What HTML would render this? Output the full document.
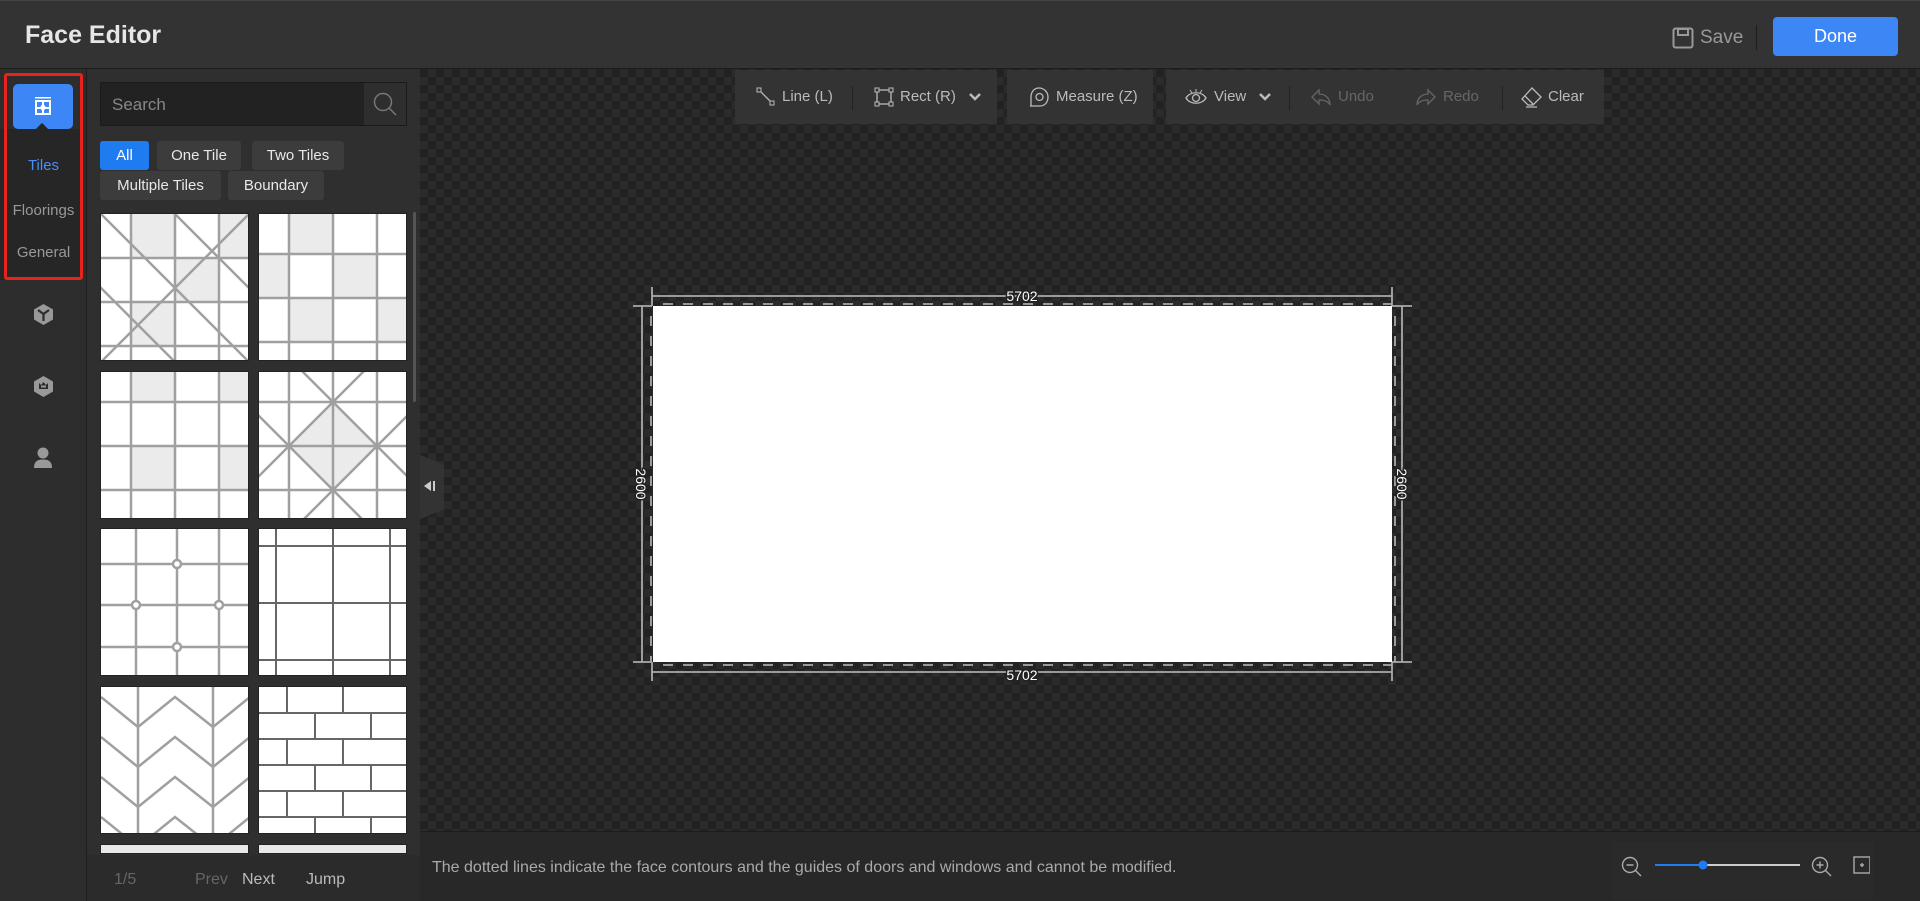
<!DOCTYPE html>
<html><head><meta charset="utf-8"><style>
*{box-sizing:border-box;margin:0;padding:0}
body{width:1920px;height:901px;overflow:hidden;background:#2b2b2b;font-family:"Liberation Sans",sans-serif;position:relative;color:#ddd}
.abs{position:absolute}
#hdr{left:0;top:0;width:1920px;height:69px;background:#333;border-top:1px solid #444;border-bottom:1px solid #1c1c1c}
#side{left:0;top:69px;width:87px;height:832px;background:#2d2d2d;border-right:1px solid #1e1e1e}
#panel{left:87px;top:69px;width:333px;height:832px;background:#2f2f2f}
#canvas{left:420px;top:69px;width:1500px;height:762px;
background-color:#222;
background-image:linear-gradient(45deg,#2b2b2b 25%,transparent 25%,transparent 75%,#2b2b2b 75%),linear-gradient(45deg,#2b2b2b 25%,transparent 25%,transparent 75%,#2b2b2b 75%);
background-size:16px 16px;background-position:0 0,8px 8px}
#foot{left:420px;top:831px;width:1500px;height:70px;background:#282828;border-top:1px solid #1d1d1d}
.chip{position:absolute;height:29px;background:#3c3c3c;border-radius:3px;color:#e8e8e8;font-size:15px;line-height:29px;text-align:center}
.tile{position:absolute;width:149px;height:148px;background:#fff;border:1px solid #222;overflow:hidden}
.tb{position:absolute;top:70px;height:54px;background:#333;border-radius:2px}
.tbi{position:absolute;top:0;height:54px;line-height:54px;font-size:15px;color:#bbb;display:flex;align-items:center;gap:6px}
.sep{position:absolute;top:16px;width:1px;height:24px;background:#222}
</style></head><body>
<div id="hdr" class="abs">
  <div class="abs" style="left:25px;top:20px;font-size:25px;font-weight:bold;color:#e6e6e6">Face Editor</div>
  <svg class="abs" style="left:1672px;top:26px" width="22" height="22" viewBox="0 0 22 22"><rect x="1.5" y="1.5" width="19" height="19" rx="2" fill="none" stroke="#999" stroke-width="2"/><rect x="6" y="2" width="10" height="6" fill="none" stroke="#999" stroke-width="2"/></svg>
  <div class="abs" style="left:1700px;top:26px;font-size:19px;color:#999">Save</div>
  <div class="abs" style="left:1756px;top:24px;width:1px;height:25px;background:#1c1c1c"></div>
  <div class="abs" style="left:1773px;top:16px;width:125px;height:39px;background:#3d86f5;border-radius:4px;color:#fff;font-size:18px;line-height:39px;text-align:center">Done</div>
</div>
<div id="side" class="abs">
  <div class="abs" style="left:0;top:60px;width:80px;height:151px;background:#262626"></div>
  <div class="abs" style="left:13px;top:15px;width:60px;height:45px;background:#3d86f5;border-radius:5px"></div>
  <svg class="abs" style="left:34px;top:28px" width="18" height="19" viewBox="0 0 18 19"><rect x="1" y="3" width="16" height="15" fill="#fff"/><rect x="3" y="5" width="5" height="5" fill="#3d86f5"/><rect x="10" y="5" width="5" height="5" fill="#3d86f5"/><rect x="3" y="12" width="5" height="4" fill="#3d86f5"/><rect x="10" y="12" width="5" height="4" fill="#3d86f5"/><path d="M9 6 L12 10.5 L9 15 L6 10.5Z" fill="#fff"/><rect x="1" y="0" width="16" height="1.5" fill="#fff"/></svg>
  <div class="abs" style="left:37px;top:56px;width:10px;height:10px;background:#262626;transform:rotate(45deg)"></div>
  <div class="abs" style="left:0;top:88px;width:87px;text-align:center;color:#4a8ef5;font-size:15px">Tiles</div>
  <div class="abs" style="left:0;top:133px;width:87px;text-align:center;color:#999;font-size:15px">Floorings</div>
  <div class="abs" style="left:0;top:175px;width:87px;text-align:center;color:#999;font-size:15px">General</div>
  <div class="abs" style="left:4px;top:4px;width:79px;height:207px;border:3px solid #e8231d;border-radius:3px"></div>
  <svg class="abs" style="left:33px;top:234px" width="21" height="23" viewBox="0 0 21 23"><path d="M10.5 1 L20 6.5 V16.5 L10.5 22 L1 16.5 V6.5Z" fill="#999"/><path d="M5 7 L10.5 11 L16 7 M10.5 11 V18" stroke="#2d2d2d" stroke-width="2.2" fill="none"/></svg>
  <svg class="abs" style="left:33px;top:306px" width="21" height="23" viewBox="0 0 21 23"><path d="M10.5 1 L20 6.5 V16.5 L10.5 22 L1 16.5 V6.5Z" fill="#999"/><path d="M6 8 L8 10 L10.5 7 L13 10 L15 8 V14 H6Z" fill="#2d2d2d"/><rect x="8" y="10.5" width="5" height="2" fill="#999"/></svg>
  <svg class="abs" style="left:33px;top:378px" width="20" height="22" viewBox="0 0 20 22"><circle cx="10" cy="6" r="5.5" fill="#999"/><path d="M1 21 C1 14 5 12.5 10 12.5 C15 12.5 19 14 19 21Z" fill="#999"/></svg>
</div>
<div id="panel" class="abs">
  <div class="abs" style="left:13px;top:13px;width:307px;height:44px;background:#222;border:1px solid #1a1a1a"></div>
  <div class="abs" style="left:25px;top:26px;font-size:17px;color:#888">Search</div>
  <div class="abs" style="left:277px;top:14px;width:42px;height:42px;background:#2e2e2e"></div>
  <svg class="abs" style="left:285px;top:22px" width="26" height="26" viewBox="0 0 26 26"><circle cx="11" cy="11" r="8.5" fill="none" stroke="#777" stroke-width="1.5"/><path d="M17 17 L24 24" stroke="#777" stroke-width="1.5"/></svg>
  <div class="chip" style="left:13px;top:72px;width:49px;background:#1e7bf0;color:#fff">All</div>
  <div class="chip" style="left:70px;top:72px;width:84px">One Tile</div>
  <div class="chip" style="left:165px;top:72px;width:92px">Two Tiles</div>
  <div class="chip" style="left:13px;top:102px;width:121px">Multiple Tiles</div>
  <div class="chip" style="left:141px;top:102px;width:96px">Boundary</div>
  <div class="abs" style="left:326px;top:143px;width:3px;height:190px;background:#555;border-radius:2px"></div>
</div>
<!-- tiles -->
<div class="tile" style="left:100px;top:213px"><svg width="149" height="148"><g fill="#ebebeb"><rect x="30" y="0" width="44" height="44"/><rect x="74" y="44" width="44" height="44"/><rect x="30" y="88" width="44" height="44"/><rect x="118" y="0" width="31" height="44"/></g><g stroke="#a0a0a0" stroke-width="2.5" fill="none"><path d="M30 0V148M74 0V148M118 0V148M0 44H149M0 88H149M0 132H149"/><path d="M0 0L148 148M148 0L0 148M-74 0L74 148M74 0L222 148"/></g></svg></div>
<div class="tile" style="left:258px;top:213px"><svg width="149" height="148"><g fill="#ebebeb"><rect x="30" y="0" width="44" height="40"/><rect x="74" y="40" width="44" height="44"/><rect x="30" y="84" width="44" height="44"/><rect x="118" y="84" width="31" height="44"/><rect x="0" y="40" width="30" height="44"/></g><g stroke="#a0a0a0" stroke-width="2.5" fill="none"><path d="M30 0V148M74 0V148M118 0V148M0 40H149M0 84H149M0 128H149"/></g></svg></div>
<div class="tile" style="left:100px;top:371px"><svg width="149" height="148"><g fill="#ebebeb"><rect x="30" y="0" width="44" height="30"/><rect x="118" y="0" width="31" height="30"/><rect x="30" y="74" width="44" height="44"/><rect x="118" y="74" width="31" height="44"/></g><g stroke="#a0a0a0" stroke-width="2.5" fill="none"><path d="M30 0V148M74 0V148M118 0V148M0 30H149M0 74H149M0 118H149"/></g></svg></div>
<div class="tile" style="left:258px;top:371px"><svg width="149" height="148"><g fill="#ebebeb"><path d="M74 30L118 74L74 118L30 74Z"/></g><g stroke="#a0a0a0" stroke-width="2.5" fill="none"><path d="M30 0V148M74 0V148M118 0V148M0 30H149M0 74H149M0 118H149"/><path d="M74 30L118 74L74 118L30 74ZM74 30L30 -14M74 30L118 -14M30 74L-14 118M118 74L162 118M74 118L30 162M74 118L118 162M30 74L-14 30M118 74L162 30"/></g></svg></div>
<div class="tile" style="left:100px;top:528px"><svg width="149" height="148"><g stroke="#a0a0a0" stroke-width="2.5" fill="#fff"><path d="M35 0V148M76 0V148M118 0V148M0 35H149M0 76H149M0 118H149" fill="none"/><circle cx="76" cy="35" r="4"/><circle cx="35" cy="76" r="4"/><circle cx="118" cy="76" r="4"/><circle cx="76" cy="118" r="4"/></g></svg></div>
<div class="tile" style="left:258px;top:528px"><svg width="149" height="148"><g stroke="#666" stroke-width="2" fill="none"><path d="M17 0V148M74 0V148M131 0V148M0 17H149M0 74H149M0 131H149"/></g></svg></div>
<div class="tile" style="left:100px;top:686px"><svg width="149" height="148"><g stroke="#a0a0a0" stroke-width="2.5" fill="none"><path d="M37 0V148M112 0V148"/><path d="M0 10L37 40L74 10L112 40L149 10M0 50L37 80L74 50L112 80L149 50M0 90L37 120L74 90L112 120L149 90M0 130L37 160L74 130L112 160L149 130"/></g></svg></div>
<div class="tile" style="left:258px;top:686px"><svg width="149" height="148"><g stroke="#666" stroke-width="2" fill="none"><path d="M0 26H149M0 52H149M0 78H149M0 104H149M0 130H149M28 0V26M84 0V26M56 26V52M112 26V52M28 52V78M84 52V78M56 78V104M112 78V104M28 104V130M84 104V130M56 130V148M112 130V148"/></g></svg></div>
<div class="tile" style="left:100px;top:844px;height:10px;background:#e8e8e8"></div>
<div class="tile" style="left:258px;top:844px;height:10px;background:#e8e8e8"></div>
<div class="abs" style="left:87px;top:855px;width:333px;height:46px;background:#2b2b2b"></div>
<div class="abs" style="left:114px;top:871px;font-size:16px;color:#666">1/5</div>
<div class="abs" style="left:195px;top:871px;font-size:16px;color:#666">Prev</div>
<div class="abs" style="left:242px;top:871px;font-size:16px;color:#bbb">Next</div>
<div class="abs" style="left:306px;top:871px;font-size:16px;color:#bbb">Jump</div>
<div id="canvas" class="abs"></div>
<div class="abs" style="left:420px;top:455px;width:24px;height:64px;background:#333;clip-path:polygon(0 0,100% 15%,100% 85%,0 100%)"></div>
<svg class="abs" style="left:423px;top:479px" width="14" height="14" viewBox="0 0 14 14"><path d="M1 7L8 2V12Z" fill="#ccc"/><rect x="10" y="2" width="2" height="10" fill="#ccc"/></svg>
<!-- toolbars -->
<div class="tb" style="left:735px;width:262px"></div>
<div class="tb" style="left:1007px;width:146px"></div>
<div class="tb" style="left:1166px;width:438px"></div>
<div class="sep" style="left:852px;top:86px"></div>
<div class="sep" style="left:1289px;top:86px"></div>
<div class="sep" style="left:1502px;top:86px"></div>
<div class="tbi" style="left:756px;top:70px"><svg width="20" height="20"><path d="M3 3L16 16" stroke="#bbb" stroke-width="1.3"/><rect x="1" y="1" width="4" height="4" fill="#333" stroke="#bbb"/><rect x="14" y="14" width="4" height="4" fill="#333" stroke="#bbb"/></svg>Line (L)</div>
<div class="tbi" style="left:874px;top:70px"><svg width="20" height="20"><rect x="3" y="3" width="14" height="14" fill="none" stroke="#bbb" stroke-width="1.3"/><g fill="#333" stroke="#bbb"><rect x="1" y="1" width="4" height="4"/><rect x="15" y="1" width="4" height="4"/><rect x="1" y="15" width="4" height="4"/><rect x="15" y="15" width="4" height="4"/></g></svg>Rect (R)<svg width="14" height="14" style="margin-left:6px"><path d="M2 4L7 9L12 4" stroke="#bbb" stroke-width="2.5" fill="none"/></svg></div>
<div class="tbi" style="left:1028px;top:70px"><svg width="22" height="22"><path d="M2 20H12C17 20 20 16 20 11C20 6 16 2 11 2C6 2 3 6 3 11V20" fill="none" stroke="#bbb" stroke-width="1.3"/><circle cx="11.5" cy="11" r="3.5" fill="none" stroke="#bbb" stroke-width="1.3"/></svg>Measure (Z)</div>
<div class="tbi" style="left:1184px;top:70px"><svg width="24" height="20"><path d="M2 11C6 4 18 4 22 11C18 18 6 18 2 11Z" fill="none" stroke="#bbb" stroke-width="1.3"/><circle cx="12" cy="11" r="3.5" fill="none" stroke="#bbb" stroke-width="1.3"/><path d="M12 2V5M6 3L8 6M18 3L16 6" stroke="#bbb"/></svg>View<svg width="14" height="14" style="margin-left:6px"><path d="M2 4L7 9L12 4" stroke="#bbb" stroke-width="2.5" fill="none"/></svg></div>
<div class="tbi" style="left:1310px;top:70px;color:#666"><svg width="22" height="20"><path d="M9 3L2 10L9 17V13C14 13 18 14 20 18C20 11 15 7 9 7Z" fill="none" stroke="#666" stroke-width="1.3"/></svg>Undo</div>
<div class="tbi" style="left:1415px;top:70px;color:#666"><svg width="22" height="20"><path d="M13 3L20 10L13 17V13C8 13 4 14 2 18C2 11 7 7 13 7Z" fill="none" stroke="#666" stroke-width="1.3"/></svg>Redo</div>
<div class="tbi" style="left:1520px;top:70px"><svg width="22" height="22"><path d="M12 2L21 11L13 19H8L2 13Z M5 10L13 18 M6 21H17" fill="none" stroke="#bbb" stroke-width="1.3"/></svg>Clear</div>
<!-- drawing -->
<svg class="abs" style="left:620px;top:280px" width="810" height="410" viewBox="620 280 810 410">
  <rect x="653" y="306" width="739" height="356" fill="#fff"/>
  <g stroke="#aaa" stroke-width="1.8" fill="none">
    <path d="M652 287V306M1392 287V306M652 296H1392"/>
    <path d="M652 662V681M1392 662V681M652 672H1392"/>
    <path d="M633 306H652M633 662H652M642 306V662"/>
    <path d="M1392 306H1412M1392 662H1412M1402 306V662"/>
  </g>
  <g stroke="#aaa" stroke-width="1.8" stroke-dasharray="10 10" fill="none">
    <path d="M663 304H1392M663 665H1392M651 316V662M1395 316V662"/>
  </g>
  <g font-family="Liberation Sans" font-size="14" fill="#fff" stroke="#222" stroke-width="3" paint-order="stroke" text-anchor="middle">
    <text x="1022" y="301">5702</text>
    <text x="1022" y="680">5702</text>
    <text transform="translate(636,484) rotate(90)">2600</text>
    <text transform="translate(1397,484) rotate(90)">2600</text>
  </g>
</svg>
<div id="foot" class="abs">
  <div class="abs" style="left:12px;top:27px;font-size:16px;color:#aaa">The dotted lines indicate the face contours and the guides of doors and windows and cannot be modified.</div>
  <div class="abs" style="left:1192px;top:10px;width:262px;height:58px;background:#2a2a2a"></div>
  <svg class="abs" style="left:1200px;top:22px" width="250" height="26">
    <g stroke="#aaa" stroke-width="1.4" fill="none"><circle cx="10" cy="11" r="7.5"/><path d="M15.5 16.5L21 22M6.5 11H13.5"/><circle cx="200" cy="11" r="7.5"/><path d="M205.5 16.5L211 22M196.5 11H203.5M200 7.5V14.5"/></g>
    <rect x="35" y="10" width="145" height="2" fill="#ccc"/><rect x="35" y="10" width="48" height="2" fill="#1e7bf0"/>
    <circle cx="83" cy="11" r="4.5" fill="#1e7bf0"/>
    <g stroke="#aaa" stroke-width="1.4" fill="none"><rect x="234" y="3" width="16" height="16"/><path d="M240 11H244M242 9V13"/></g>
  </svg>
</div>
</body></html>
